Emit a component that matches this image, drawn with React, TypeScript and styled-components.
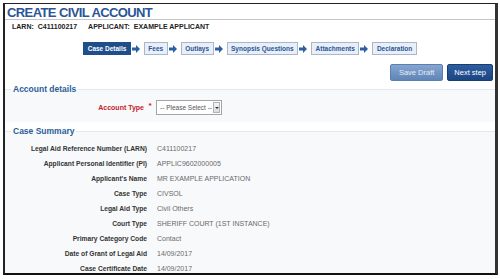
import { Fragment } from 'react';
import styled, { createGlobalStyle } from 'styled-components';

const GlobalStyle = createGlobalStyle`
  html, body {
    margin: 0;
    padding: 0;
    background: #fff;
  }
  body {
    font-family: "Liberation Sans", Arial, sans-serif;
  }
`;

const Frame = styled.div`
  box-sizing: border-box;
  margin: 3px 0 0 3px;
  width: 495px;
  height: 272px;
  border-top: 1px solid #222;
  border-left: 2px solid #222;
  border-right: 3px solid #333;
  border-bottom: 2px solid #111;
  display: flex;
  flex-direction: column;
  overflow: hidden;
`;

const Title = styled.h1`
  margin: 0;
  padding: 1px 0 0 2px;
  height: 14px;
  line-height: 15px;
  font-size: 13px;
  letter-spacing: -0.6px;
  font-weight: bold;
  color: #2a5597;
  border-bottom: 1px solid #c4c4c4;
`;

const InfoLine = styled.div`
  display: flex;
  gap: 11px;
  padding: 1px 0 0 7px;
  height: 12px;
  line-height: 12px;
  font-size: 7px;
  font-weight: bold;
  color: #222;
`;

const InfoValue = styled.span`
  margin-left: 4px;
`;

const Steps = styled.div`
  display: flex;
  justify-content: center;
  align-items: center;
  margin-top: 9px;
  height: 13px;
`;

const Step = styled.div<{ $active?: boolean }>`
  box-sizing: border-box;
  height: 13px;
  line-height: 11px;
  padding: 0 3.5px;
  font-size: 6.5px;
  font-weight: bold;
  white-space: nowrap;
  border: 1px solid ${({ $active }) => ($active ? '#1f4f8a' : '#a9b7c8')};
  background: ${({ $active }) => ($active ? '#1f4f8a' : '#e8eff8')};
  color: ${({ $active }) => ($active ? '#fff' : '#2a5597')};
`;

const ArrowWrap = styled.span`
  display: flex;
  margin: 0 4px 0 1px;
`;

const Actions = styled.div`
  display: flex;
  justify-content: flex-end;
  gap: 4px;
  margin-top: 9px;
  padding-right: 2px;
`;

const Button = styled.div<{ $primary?: boolean }>`
  height: 15px;
  line-height: 15px;
  padding: 0 ${({ $primary }) => ($primary ? '6px' : '8px')};
  font-size: 7.5px;
  border-radius: 2px;
  color: ${({ $primary }) => ($primary ? '#fff' : '#e4ecf6')};
  background: ${({ $primary }) =>
    $primary
      ? 'linear-gradient(#2d5e9e, #1b4583)'
      : 'linear-gradient(#86a6cf, #5f85b8)'};
  border: 1px solid ${({ $primary }) => ($primary ? '#173d74' : '#5a7fb0')};
`;

const Section = styled.fieldset<{ $grow?: boolean }>`
  margin: ${({ $grow }) => ($grow ? '4px 0 0' : '3px 0 0')};
  padding: 0;
  border: none;
  border-top: 1px solid #e4e7ec;
  background: #f8f9fb;
  min-width: 0;
  flex: ${({ $grow }) => ($grow ? 1 : 'none')};
`;

const Legend = styled.legend`
  margin-left: 6px;
  padding: 0 2px;
  font-size: 8.5px;
  font-weight: bold;
  color: #2b5e99;
`;

const FieldRow = styled.div`
  display: flex;
  align-items: center;
  padding: 6px 0 7px;
`;

const FieldLabel = styled.div`
  width: 139px;
  text-align: right;
  font-size: 7px;
  font-weight: bold;
  color: #c8202a;
`;

const Required = styled.div`
  width: 12px;
  text-align: center;
  font-size: 8px;
  font-weight: bold;
  color: #c8202a;
  align-self: flex-start;
  margin-top: 1px;
`;

const SelectBox = styled.div`
  box-sizing: border-box;
  display: flex;
  align-items: center;
  width: 66px;
  height: 15px;
  border: 1px solid #a5a5a5;
  background: #fff;
  font-size: 6.5px;
  color: #555;
`;

const SelectText = styled.span`
  flex: 1;
  padding-left: 3px;
  white-space: nowrap;
`;

const SelectButton = styled.span`
  box-sizing: border-box;
  width: 7px;
  height: 11px;
  margin-right: 1px;
  border: 1px solid #b3b3b3;
  background: linear-gradient(#f4f4f4, #dcdcdc);
  display: flex;
  align-items: center;
  justify-content: center;
  &::after {
    content: '';
    border-left: 2px solid transparent;
    border-right: 2px solid transparent;
    border-top: 2px solid #333;
  }
`;

const SummaryGrid = styled.div`
  display: grid;
  grid-template-columns: 142px auto;
  column-gap: 10px;
  padding-top: 5px;
`;

const SummaryLabel = styled.div`
  text-align: right;
  height: 15px;
  line-height: 15px;
  font-size: 6.7px;
  font-weight: bold;
  color: #333;
`;

const SummaryValue = styled.div`
  height: 15px;
  line-height: 15px;
  font-size: 7px;
  color: #6a6a6a;
`;

const StepArrow = () => (
  <ArrowWrap>
    <svg width="8" height="8" viewBox="0 0 8 8">
      <path d="M0 2.5h4V0L8 4 4 8V5.5H0z" fill="#2c5fa3" />
    </svg>
  </ArrowWrap>
);

const steps = ['Case Details', 'Fees', 'Outlays', 'Synopsis Questions', 'Attachments', 'Declaration'];

const summary: [string, string][] = [
  ['Legal Aid Reference Number (LARN)', 'C411100217'],
  ['Applicant Personal Identifier (PI)', 'APPLIC9602000005'],
  ["Applicant's Name", 'MR EXAMPLE APPLICATION'],
  ['Case Type', 'CIVSOL'],
  ['Legal Aid Type', 'Civil Others'],
  ['Court Type', 'SHERIFF COURT (1ST INSTANCE)'],
  ['Primary Category Code', 'Contact'],
  ['Date of Grant of Legal Aid', '14/09/2017'],
  ['Case Certificate Date', '14/09/2017'],
];

export default function App() {
  return (
    <>
      <GlobalStyle />
      <Frame>
        <Title>CREATE CIVIL ACCOUNT</Title>
        <InfoLine>
          <span>
            LARN:<InfoValue>C411100217</InfoValue>
          </span>
          <span>
            APPLICANT:<InfoValue>EXAMPLE APPLICANT</InfoValue>
          </span>
        </InfoLine>
        <Steps>
          {steps.map((s, i) => (
            <Fragment key={s}>
              <Step $active={i === 0}>{s}</Step>
              {i < steps.length - 1 && <StepArrow />}
            </Fragment>
          ))}
        </Steps>
        <Actions>
          <Button>Save Draft</Button>
          <Button $primary>Next step</Button>
        </Actions>
        <Section>
          <Legend>Account details</Legend>
          <FieldRow>
            <FieldLabel>Account Type</FieldLabel>
            <Required>*</Required>
            <SelectBox>
              <SelectText>-- Please Select --</SelectText>
              <SelectButton />
            </SelectBox>
          </FieldRow>
        </Section>
        <Section $grow>
          <Legend>Case Summary</Legend>
          <SummaryGrid>
            {summary.map(([label, value]) => (
              <Fragment key={label}>
                <SummaryLabel>{label}</SummaryLabel>
                <SummaryValue>{value}</SummaryValue>
              </Fragment>
            ))}
          </SummaryGrid>
        </Section>
      </Frame>
    </>
  );
}
